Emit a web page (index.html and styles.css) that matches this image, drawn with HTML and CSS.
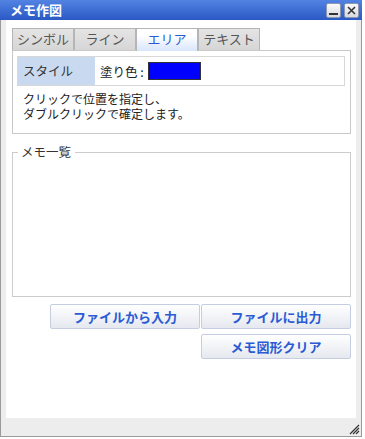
FILE: index.html
```html
<!DOCTYPE html>
<html lang="ja">
<head>
    <meta charset="UTF-8">
    <title>メモ作図</title>
    <link rel="stylesheet" href="styles.css">
</head>
<body>
    <div class="window">
        <div class="title-bar">
            <span class="title">メモ作図</span>
            <div class="title-tools">
                <button class="tool-button" title="最小化">
                    <svg width="9" height="9" viewBox="0 0 9 9"><rect x="0" y="7" width="9" height="2" fill="#333"/></svg>
                </button>
                <button class="tool-button" title="閉じる">
                    <svg width="9" height="9" viewBox="0 0 9 9"><path d="M1 1 L8 8 M8 1 L1 8" stroke="#333" stroke-width="1.6"/></svg>
                </button>
            </div>
        </div>

        <div class="window-body">
            <div class="content">
                <div class="tabs">
                    <div class="tab">シンボル</div>
                    <div class="tab">ライン</div>
                    <div class="tab active">エリア</div>
                    <div class="tab">テキスト</div>
                </div>

                <div class="tab-panel">
                    <div class="style-row">
                        <div class="style-label">スタイル</div>
                        <div class="style-value">
                            <span>塗り色 :</span>
                            <span class="color-swatch"></span>
                        </div>
                    </div>
                    <p class="hint">クリックで位置を指定し、</p>
                    <p class="hint">ダブルクリックで確定します。</p>
                </div>

                <fieldset class="memo-list">
                    <legend>メモ一覧</legend>
                </fieldset>

                <div class="actions">
                    <div class="action-row">
                        <button class="action-button">ファイルから入力</button>
                        <button class="action-button">ファイルに出力</button>
                    </div>
                    <button class="action-button">メモ図形クリア</button>
                </div>
            </div>

            <div class="status-bar">
                <svg class="resize-grip" width="11" height="11" viewBox="0 0 11 11">
                    <path d="M10 1 L1 10 M10 4 L4 10 M10 7 L7 10" stroke="#333" stroke-width="1.2"/>
                </svg>
            </div>
        </div>
    </div>
</body>
</html>
```

FILE: styles.css
```css
* {
    margin: 0;
    padding: 0;
    box-sizing: border-box;
}

body {
    background: #fff;
    font-family: 'Noto Sans CJK JP', 'Noto Sans', sans-serif;
    font-size: 12px;
    color: #222;
}

.window {
    width: 362px;
}

.title-bar {
    height: 20px;
    display: flex;
    align-items: center;
    justify-content: space-between;
    padding: 0 3px 0 10px;
    background: linear-gradient(#5283e2, #2a59c4);
}

.title {
    color: #fff;
    font-size: 13px;
    font-weight: bold;
    line-height: 14px;
}

.title-tools {
    display: flex;
    gap: 3px;
}

.tool-button {
    width: 15px;
    height: 15px;
    display: flex;
    align-items: center;
    justify-content: center;
    border: 1px solid #8c97b0;
    border-radius: 2px;
    background: linear-gradient(#fafafa, #d6d9e0);
}

.window-body {
    border: 1px solid #9a9a9a;
    border-top: none;
    background: #ededed;
    padding: 0 5px;
}

.content {
    height: 398px;
    background: #fff;
    padding: 8px 5px 0 6px;
}

.tabs {
    display: flex;
    height: 22px;
}

.tab {
    width: 62px;
    height: 22px;
    border: 1px solid #b5b5b5;
    border-bottom: none;
    background: linear-gradient(#e4e4e4, #d6d6d6);
    color: #555;
    font-size: 13px;
    text-align: center;
    line-height: 20px;
}

.tab.active {
    height: 23px;
    position: relative;
    z-index: 1;
    background: linear-gradient(#ffffff 30%, #d8e5fb);
    color: #2a5ad6;
}

.tab-panel {
    height: 84px;
    border: 1px solid #c8c8c8;
    padding: 5px 5px 0 4px;
}

.style-row {
    display: flex;
    height: 30px;
    border: 1px solid #d8d8d8;
    margin-bottom: 5px;
}

.style-label {
    width: 77px;
    background: #c9d9ef;
    color: #333;
    padding-left: 5px;
    font-size: 12.5px;
    line-height: 28px;
}

.style-value {
    display: flex;
    align-items: center;
    gap: 4px;
    padding-left: 5px;
    font-size: 12.5px;
    color: #222;
}

.color-swatch {
    width: 53px;
    height: 18px;
    background: #0000ff;
    border: 1px solid #333;
}

.hint {
    padding-left: 6px;
    height: 15px;
    font-size: 12px;
    line-height: 15px;
}

.memo-list {
    margin-top: 11px;
    height: 152px;
    border: 1px solid #cccccc;
}

.memo-list legend {
    margin-left: 5px;
    padding: 0 4px 0 3px;
    font-size: 12.5px;
    line-height: 14px;
    color: #333;
}

.actions {
    margin-top: 7px;
    display: flex;
    flex-direction: column;
    align-items: flex-end;
    gap: 5px;
}

.action-row {
    display: flex;
    gap: 1px;
}

.action-button {
    width: 150px;
    height: 25px;
    border: 1px solid #c5cee0;
    border-radius: 2px;
    background: linear-gradient(#ffffff, #e5e8ef);
    color: #2a5bd4;
    font-family: inherit;
    font-size: 13px;
    font-weight: bold;
}

.status-bar {
    height: 18px;
    display: flex;
    justify-content: flex-end;
    align-items: flex-end;
    padding-bottom: 1px;
}

.resize-grip {
    margin-right: -4px;
}
```
